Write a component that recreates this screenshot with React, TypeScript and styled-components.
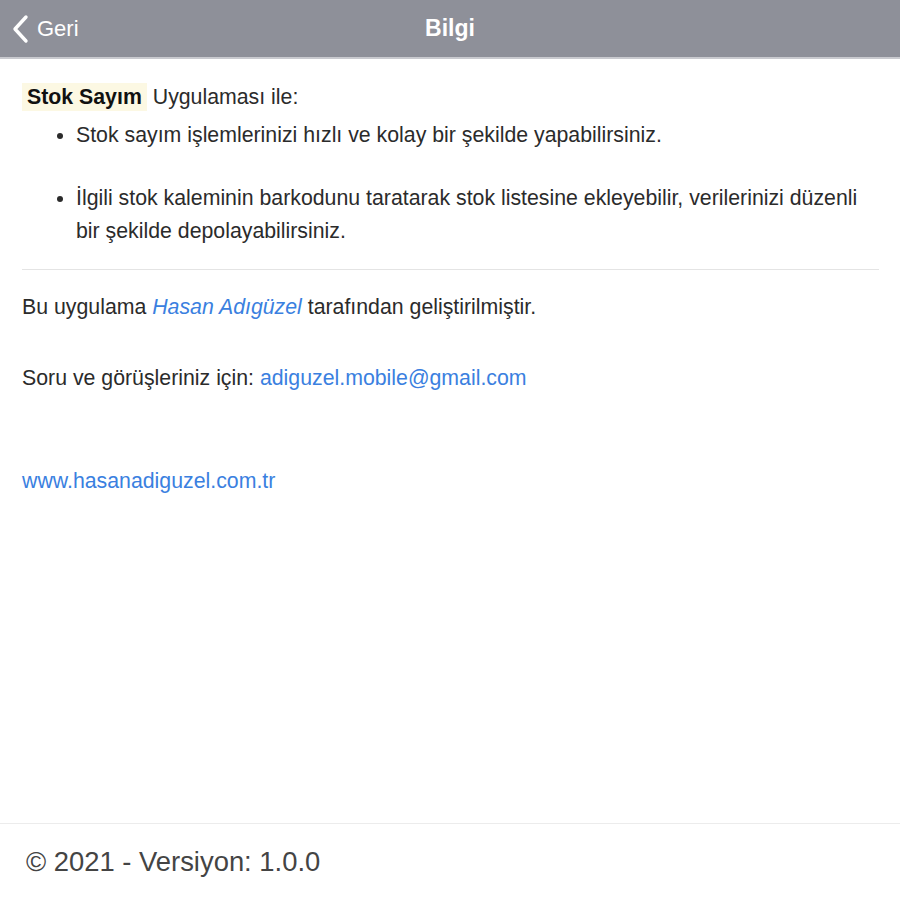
import React from "react";
import styled, { createGlobalStyle } from "styled-components";

const GlobalStyle = createGlobalStyle`
  html, body {
    margin: 0;
    padding: 0;
    background: #ffffff;
    font-family: "Liberation Sans", Arial, sans-serif;
  }
`;

const App: React.FunctionComponent = () => {
  return (
    <>
      <GlobalStyle />
      <Page>
        <Header>
          <BackButton>
            <svg width="18" height="30" viewBox="0 0 18 30">
              <path
                d="M15 3 L4 15 L15 27"
                fill="none"
                stroke="#ffffff"
                strokeWidth="3.4"
                strokeLinecap="round"
                strokeLinejoin="round"
              />
            </svg>
            Geri
          </BackButton>
          <Title>Bilgi</Title>
        </Header>

        <Content>
          <Intro>
            <AppName>Stok Sayım</AppName> Uygulaması ile:
          </Intro>
          <List>
            <Item>Stok sayım işlemlerinizi hızlı ve kolay bir şekilde yapabilirsiniz.</Item>
            <Item>
              İlgili stok kaleminin barkodunu taratarak stok listesine ekleyebilir, verilerinizi düzenli
              bir şekilde depolayabilirsiniz.
            </Item>
          </List>
          <Divider />
          <Paragraph>
            Bu uygulama <AuthorLink>Hasan Adıgüzel</AuthorLink> tarafından geliştirilmiştir.
          </Paragraph>
          <Paragraph>
            Soru ve görüşleriniz için: <TextLink>adiguzel.mobile@gmail.com</TextLink>
          </Paragraph>
          <SiteLink>www.hasanadiguzel.com.tr</SiteLink>
        </Content>

        <Footer>© 2021 - Versiyon: 1.0.0</Footer>
      </Page>
    </>
  );
};

export default App;

const Page = styled.div`
  width: 900px;
  height: 900px;
  display: flex;
  flex-direction: column;
  color: #2b2b2b;
`;

const Header = styled.div`
  position: relative;
  height: 57px;
  background: #8e9099;
  border-bottom: 2px solid #c9cacf;
  display: flex;
  align-items: center;
  justify-content: center;
`;

const BackButton = styled.div`
  position: absolute;
  left: 11px;
  top: 0;
  bottom: 0;
  display: flex;
  align-items: center;
  gap: 8px;
  color: #ffffff;
  font-size: 22px;
`;

const Title = styled.div`
  color: #ffffff;
  font-size: 23px;
  font-weight: 700;
`;

const Content = styled.div`
  flex: 1;
  padding: 22px 21px 0 22px;
  font-size: 21.3px;
  line-height: 33px;
`;

const Intro = styled.div``;

const AppName = styled.span`
  display: inline-block;
  font-weight: 700;
  color: #111;
  background: #fcf8e3;
  padding: 0 5px;
  line-height: 28px;
`;

const List = styled.ul`
  margin: 5px 0 0 0;
  padding-left: 54px;
`;

const Item = styled.li`
  margin-bottom: 30px;

  &:last-child {
    margin-bottom: 21px;
  }
`;

const Divider = styled.hr`
  border: 0;
  border-top: 1px solid #e4e4e4;
  margin: 0 0 21px 0;
`;

const Paragraph = styled.p`
  margin: 0 0 38px 0;
`;

const AuthorLink = styled.span`
  color: #3a80e0;
  font-style: italic;
`;

const TextLink = styled.span`
  color: #3a80e0;
`;

const SiteLink = styled.div`
  margin-top: 70px;
  color: #3a80e0;
`;

const Footer = styled.div`
  height: 76px;
  border-top: 1px solid #ececec;
  padding-left: 26px;
  display: flex;
  align-items: center;
  font-size: 27.4px;
  color: #444;
`;
